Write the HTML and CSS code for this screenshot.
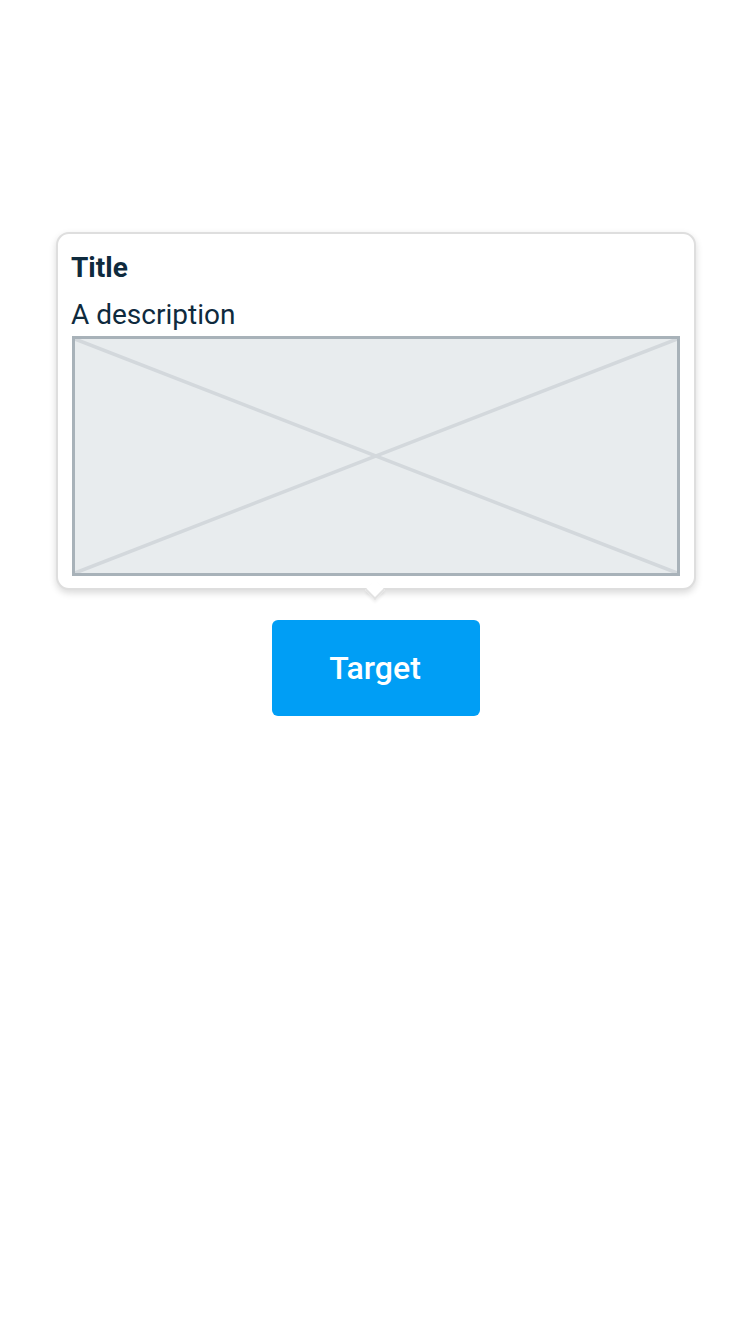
FILE: index.html
```html
<!DOCTYPE html>
<html>
<head>
<meta charset="utf-8">
<link rel="stylesheet" href="styles.css">
</head>
<body>
<div class="stage">
  <div class="popover">
    <div class="title">Title</div>
    <div class="desc">A description</div>
    <div class="placeholder">
      <svg viewBox="0 0 602 234" preserveAspectRatio="none" width="100%" height="100%">
        <line x1="0" y1="0" x2="602" y2="234" stroke="#d3d8dc" stroke-width="3.5"/>
        <line x1="602" y1="0" x2="0" y2="234" stroke="#d3d8dc" stroke-width="3.5"/>
      </svg>
    </div>
    <div class="arrow"></div>
  </div>
  <button class="target">Target</button>
</div>
</body>
</html>
```
FILE: styles.css
```css
html, body {
  margin: 0;
  padding: 0;
  background: #fff;
  font-family: Roboto, "Liberation Sans", sans-serif;
}
.stage {
  padding-top: 232px;
  padding-left: 2px;
  display: flex;
  flex-direction: column;
  align-items: center;
}
.popover {
  position: relative;
  width: 640px;
  box-sizing: border-box;
  border: 2px solid #dedede;
  border-radius: 13px;
  background: #fff;
  padding: 18px 14px 12px 14px;
  box-shadow: 0 3px 7px rgba(0,0,0,0.15);
}
.title {
  font-size: 28px;
  font-weight: 700;
  color: #0e2a3d;
  line-height: 32px;
  margin-left: -1px;
}
.desc {
  font-size: 28px;
  color: #0e2a3d;
  line-height: 32px;
  margin-top: 15px;
  margin-left: -1px;
}
.placeholder {
  box-sizing: border-box;
  height: 240px;
  border: 3px solid #a8b2b9;
  background: #e8ecee;
  margin-top: 5px;
}
.placeholder svg {
  display: block;
}
.arrow {
  position: absolute;
  left: 50%;
  bottom: -9px;
  width: 14px;
  height: 14px;
  margin-left: -8px;
  box-sizing: border-box;
  background: #fff;
  border-right: 2px solid #e2e2e2;
  border-bottom: 2px solid #e2e2e2;
  transform: rotate(45deg);
  box-shadow: 2px 2px 3px rgba(0,0,0,0.07);
}
.target {
  margin-top: 30px;
  width: 208px;
  height: 96px;
  border: 0;
  border-radius: 6px;
  background: #009ef5;
  color: #fff;
  font-family: Roboto, "Liberation Sans", sans-serif;
  font-size: 32px;
  font-weight: 500;
  padding: 0;
  padding-right: 2px;
}
```
